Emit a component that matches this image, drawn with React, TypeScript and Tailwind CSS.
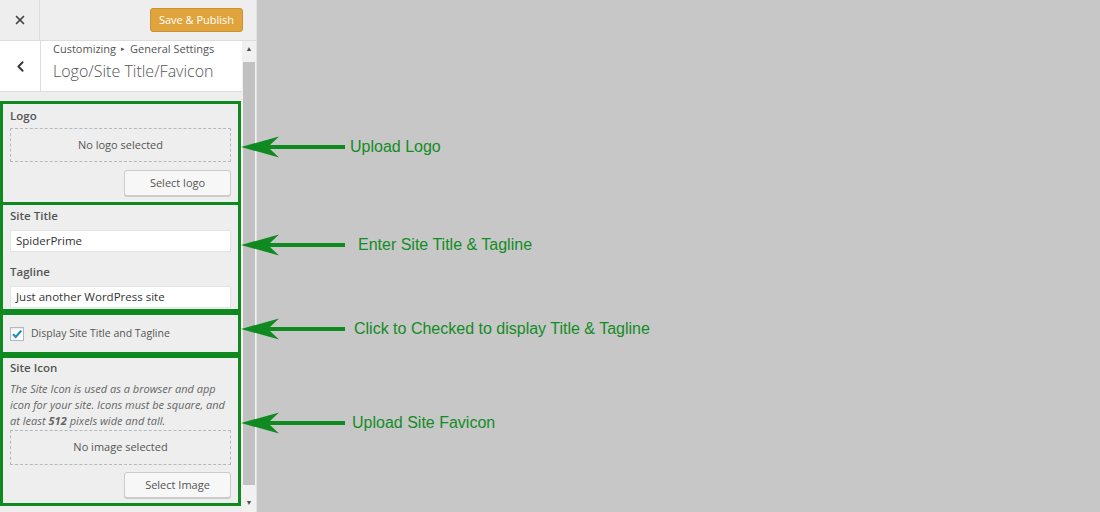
import { ChevronLeft, X } from "lucide-react";

const ui = { fontFamily: '"Segoe UI", "Open Sans", "Noto Sans", sans-serif' };
const arial = { fontFamily: '"Liberation Sans", Arial, sans-serif' };

function Arrow() {
  return (
    <svg width="106" height="24" viewBox="0 0 106 24" className="shrink-0">
      <path d="M0 12 L38 1.5 L29 10 L104 10 L104 14 L29 14 L38 22.5 Z" fill="#0f8a20" />
    </svg>
  );
}

function Note({ pos, gap, text }: { pos: string; gap: string; text: string }) {
  return (
    <div className={`absolute left-[241px] flex items-center ${pos}`}>
      <Arrow />
      <span className={`text-[16px] leading-none text-[#128c24] ${gap}`} style={arial}>
        {text}
      </span>
    </div>
  );
}

function Btn({ label }: { label: string }) {
  return (
    <div className="flex justify-end">
      <div className="w-[107px] h-[26px] flex items-center justify-center bg-[#f7f7f7] border border-[#cccccc] rounded-[3px] shadow-[0_1px_0_#cccccc] text-[11px] text-[#555]">
        {label}
      </div>
    </div>
  );
}

export default function App() {
  return (
    <div className="relative w-[1100px] h-[512px] flex bg-[#c7c7c7] overflow-hidden" style={ui}>
      <div className="w-[257px] h-full flex flex-col bg-[#eeeeee] border-r border-[#e2e2e2]">
        {/* top bar */}
        <div className="h-[41px] shrink-0 flex items-center border-b border-[#dddddd]">
          <div className="w-[40px] h-full flex items-center justify-center border-r border-[#dddddd] text-[#444]">
            <X size={14} strokeWidth={3} />
          </div>
          <div className="flex-1 flex justify-end pr-[13px]">
            <div className="w-[93px] h-[24px] flex items-center justify-center rounded-[3px] bg-[#e1a43c] border border-[#c99232] text-white text-[11px]">
              Save &amp; Publish
            </div>
          </div>
        </div>
        <div className="flex-1 flex min-h-0">
          <div className="w-[243px] flex flex-col">
            {/* panel header */}
            <div className="h-[51px] flex bg-white border-b border-[#dddddd]">
              <div className="w-[41px] flex items-center justify-center border-r border-[#dddddd] text-[#333]">
                <ChevronLeft size={17} strokeWidth={2.6} />
              </div>
              <div className="pl-[12px] pt-[1px]">
                <div className="flex items-center gap-[5px] text-[11px] leading-[14px] text-[#555]">
                  <span>Customizing</span>
                  <span className="text-[7px]">▸</span>
                  <span>General Settings</span>
                </div>
                <div className="text-[16px] leading-[26px] font-light text-[#555] mt-[2px]">
                  Logo/Site Title/Favicon
                </div>
              </div>
            </div>
            <div className="pt-[9px] flex flex-col">
              {/* logo */}
              <div className="w-[241px] h-[104px] border-[3px] border-[#0f8a20] px-[7px] pt-[4px]">
                <div className="text-[11.5px] leading-[16px] font-semibold text-[#555]">Logo</div>
                <div className="mt-[4px] h-[34px] border border-dashed border-[#b4b9be] flex items-center justify-center text-[11px] text-[#555]">
                  No logo selected
                </div>
                <div className="mt-[8px]">
                  <Btn label="Select logo" />
                </div>
              </div>
              {/* title */}
              <div className="w-[241px] h-[107px] border-[3px] border-t-0 border-[#0f8a20] px-[7px] pt-[3px]">
                <div className="text-[11.5px] leading-[16px] font-semibold text-[#555]">Site Title</div>
                <div className="mt-[6px] h-[22px] bg-white border border-[#e4e4e4] flex items-center px-[5px] text-[11.5px] text-[#333]">
                  SpiderPrime
                </div>
                <div className="mt-[12px] text-[11.5px] leading-[16px] font-semibold text-[#555]">Tagline</div>
                <div className="mt-[6px] h-[22px] bg-white border border-[#e4e4e4] flex items-center px-[5px] text-[11.5px] text-[#333]">
                  Just another WordPress site
                </div>
              </div>
              {/* checkbox */}
              <div className="w-[241px] h-[43px] border-[3px] border-[#0f8a20] px-[7px] flex items-center">
                <div className="w-[14px] h-[14px] bg-white border border-[#b4b9be] flex items-center justify-center shadow-[inset_0_1px_2px_rgba(0,0,0,0.1)]">
                  <svg width="12" height="12" viewBox="0 0 12 12">
                    <path d="M2 6.2 L4.8 9 L10.2 2.6" fill="none" stroke="#1e8cbe" strokeWidth="2.2" />
                  </svg>
                </div>
                <span className="ml-[7px] text-[10.5px] text-[#555]">Display Site Title and Tagline</span>
              </div>
              {/* site icon */}
              <div className="w-[241px] h-[151px] border-[3px] border-[#0f8a20] px-[7px] pt-[2px]">
                <div className="text-[11.5px] leading-[16px] font-semibold text-[#555]">Site Icon</div>
                <div className="mt-[5px] text-[11px] leading-[16px] italic text-[#666]">
                  <div>The Site Icon is used as a browser and app</div>
                  <div>icon for your site. Icons must be square, and</div>
                  <div className="flex gap-[3px]">
                    <span>at least</span>
                    <span className="font-bold">512</span>
                    <span>pixels wide and tall.</span>
                  </div>
                </div>
                <div className="mt-[1px] h-[35px] border border-dashed border-[#b4b9be] flex items-center justify-center text-[11px] text-[#555]">
                  No image selected
                </div>
                <div className="mt-[7px]">
                  <Btn label="Select Image" />
                </div>
              </div>
            </div>
          </div>
          {/* scrollbar */}
          <div className="w-[14px] flex flex-col items-center bg-[#f1f1f1]">
            <div className="h-[17px] flex items-center justify-center text-[#505050] text-[7px]">▲</div>
            <div className="w-[12px] mt-[4px] h-[423px] bg-[#c1c1c1]" />
            <div className="flex-1" />
            <div className="h-[18px] flex items-center justify-center text-[#505050] text-[7px]">▼</div>
          </div>
        </div>
      </div>
      <div className="flex-1" />

      <Note pos="top-[135px]" gap="ml-[3px]" text="Upload Logo" />
      <Note pos="top-[233px]" gap="ml-[11px]" text="Enter Site Title & Tagline" />
      <Note pos="top-[317px]" gap="ml-[7px]" text="Click to Checked to display Title & Tagline" />
      <Note pos="top-[411px]" gap="ml-[5px]" text="Upload Site Favicon" />
    </div>
  );
}
